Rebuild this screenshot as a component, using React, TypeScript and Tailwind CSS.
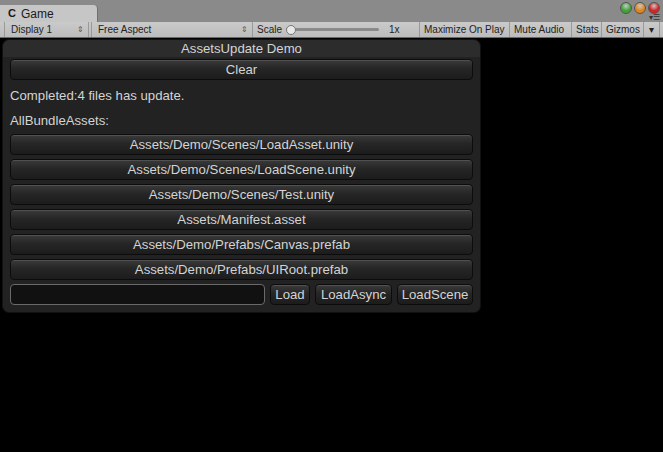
const assets = [
  'Assets/Demo/Scenes/LoadAsset.unity',
  'Assets/Demo/Scenes/LoadScene.unity',
  'Assets/Demo/Scenes/Test.unity',
  'Assets/Manifest.asset',
  'Assets/Demo/Prefabs/Canvas.prefab',
  'Assets/Demo/Prefabs/UIRoot.prefab',
]

const uiButton =
  'flex h-[21px] items-center justify-center whitespace-nowrap rounded-[4px] border border-[#0c0c0c] bg-[linear-gradient(#3a3a3a,#262626_45%,#1c1c1c)] text-[13.2px] leading-none text-[#d4d4d4] shadow-[inset_0_1px_0_rgba(255,255,255,0.12)]'

const toolItem =
  'flex h-full shrink-0 items-center whitespace-nowrap border-r border-[#999] px-[4px] text-[10px] text-[#222]'

function Light({ color }: { color: string }) {
  return (
    <span
      className="h-[12px] w-[12px] rounded-full border border-[#555]"
      style={{ background: `radial-gradient(circle at 50% 30%, #fff8 0, ${color} 55%)` }}
    />
  )
}

export default function App() {
  return (
    <div className="flex h-[452px] w-[663px] flex-col bg-black font-['Liberation_Sans',Arial,sans-serif]">
      {/* tab strip */}
      <div className="flex h-[22px] items-end justify-between bg-[#8a8a8a]">
        <div className="flex h-[17px] w-[98px] items-center gap-[5px] rounded-tr-[4px] border-r border-[#6f6f6f] bg-[#c6c6c6] pl-[8px] text-[12px] text-[#1a1a1a]">
          <span className="text-[11px] font-bold">C</span>
          <span>Game</span>
        </div>
        <div className="flex flex-col items-end self-start pr-[3px] pt-[2px]">
          <div className="flex gap-[2px]">
            <Light color="#3fa436" />
            <Light color="#e0851a" />
            <Light color="#d42323" />
          </div>
          <span className="text-[8px] leading-[8px] text-[#333]">▾☰</span>
        </div>
      </div>

      {/* toolbar */}
      <div className="flex h-[16px] items-center border-b border-[#6a6a6a] bg-[linear-gradient(#cacaca,#bcbcbc)] pl-[4px]">
        <div className={`${toolItem} w-[85px] justify-between border-l pl-[6px]`}>
          <span>Display 1</span>
          <span className="text-[8px] text-[#555]">⇕</span>
        </div>
        <div className={`${toolItem} ml-[2px] w-[162px] justify-between border-l pl-[6px]`}>
          <span>Free Aspect</span>
          <span className="text-[8px] text-[#555]">⇕</span>
        </div>
        <div className={`${toolItem} w-[167px] gap-[4px]`}>
          <span>Scale</span>
          <div className="relative flex h-[10px] w-[93px] items-center">
            <div className="h-[3px] w-full rounded bg-[#8a8a8a]" />
            <div className="absolute left-0 h-[10px] w-[10px] rounded-full border border-[#777] bg-[#e8e8e8]" />
          </div>
          <span className="ml-[6px]">1x</span>
        </div>
        <div className={`${toolItem} w-[90px]`}>Maximize On Play</div>
        <div className={`${toolItem} w-[62px]`}>Mute Audio</div>
        <div className={`${toolItem} w-[30px]`}>Stats</div>
        <div className={`${toolItem} w-[42px]`}>Gizmos</div>
        <div className={`${toolItem} w-[16px] justify-center text-[8px]`}>▾</div>
      </div>

      {/* game view */}
      <div className="flex-1 bg-black pl-[2px] pt-[1px]">
        <div className="flex w-[479px] flex-col rounded-[7px] border border-[#111] bg-[#222222] pb-[7px]">
          <div className="flex h-[17px] items-center justify-center rounded-t-[7px] bg-[#2c2c2c] text-[13.2px] text-[#d4d4d4]">
            AssetsUpdate Demo
          </div>
          <div className="flex flex-col px-[7px] pt-[2px]">
            <div className={uiButton}>Clear</div>
            <div className="mt-[8px] text-[13.2px] leading-[16px] text-[#d4d4d4]">
              Completed:4 files has update.
            </div>
            <div className="mt-[9px] text-[13.2px] leading-[16px] text-[#d4d4d4]">AllBundleAssets:</div>
            <div className="mt-[5px] flex flex-col gap-[4px]">
              {assets.map((a) => (
                <div key={a} className={uiButton}>
                  {a}
                </div>
              ))}
            </div>
            <div className="mt-[4px] flex gap-[5px]">
              <div className="h-[21px] flex-1 rounded-[4px] border border-[#6a6a6a] bg-[#111]" />
              <div className={`${uiButton} w-[40px]`}>Load</div>
              <div className={`${uiButton} w-[77px]`}>LoadAsync</div>
              <div className={`${uiButton} w-[76px]`}>LoadScene</div>
            </div>
          </div>
        </div>
      </div>
    </div>
  )
}
